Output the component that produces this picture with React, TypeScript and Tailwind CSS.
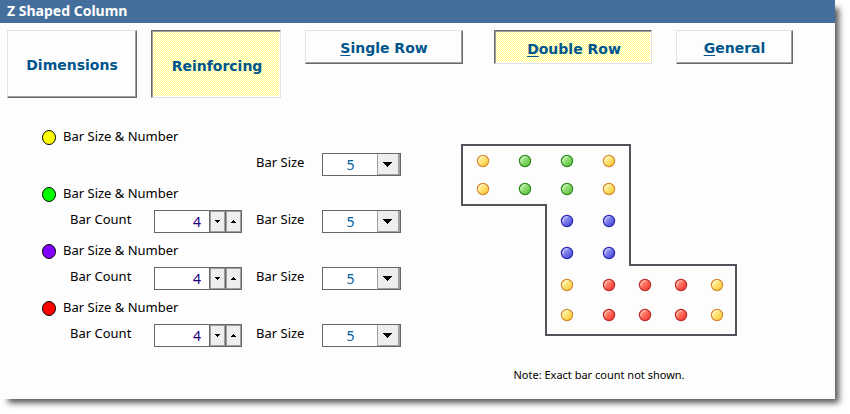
import { useState } from "react"

type Group = {
    id: string
    dot: string
    hasCount: boolean
}

const groups: Group[] = [
    { id: "yellow", dot: "#ffff00", hasCount: false },
    { id: "green", dot: "#00ff00", hasCount: true },
    { id: "purple", dot: "#8000ff", hasCount: true },
    { id: "red", dot: "#ff0000", hasCount: true },
]

// bars drawn inside the section: x, y, colour
const bars: [number, number, string][] = [
    [22, 17, "yellow"], [64, 17, "green"], [106, 17, "green"], [148, 17, "yellow"],
    [22, 45, "yellow"], [64, 45, "green"], [106, 45, "green"], [148, 45, "yellow"],
    [106, 77, "blue"], [148, 77, "blue"],
    [106, 109, "blue"], [148, 109, "blue"],
    [106, 141, "yellow"], [148, 141, "red"], [184, 141, "red"], [220, 141, "red"], [256, 141, "yellow"],
    [106, 171, "yellow"], [148, 171, "red"], [184, 171, "red"], [220, 171, "red"], [256, 171, "yellow"],
]

const barColors: Record<string, { edge: string; light: string; dark: string }> = {
    yellow: { edge: "#d88a30", light: "#fff6a8", dark: "#fbcb3c" },
    green: { edge: "#2f8a1c", light: "#b4f09a", dark: "#62c444" },
    blue: { edge: "#2a2ab8", light: "#a8a8fa", dark: "#4a4ad8" },
    red: { edge: "#c42a2a", light: "#ff9a80", dark: "#f83c34" },
}

function TabButton({ hotkey, label, active, size, onClick }: {
    hotkey?: string
    label: string
    active: boolean
    size: string
    onClick: () => void
}) {
    const look = active
        ? "border-t-[#696969] border-l-[#696969] border-r-[#e3e3e3] border-b-[#e3e3e3] shadow-[inset_1px_1px_#a0a0a0,inset_-1px_-1px_#ffffff] bg-[repeating-conic-gradient(#ffff80_0_25%,#ffffff_0_50%)] bg-[length:2px_2px] bg-[position:1px_0px] pt-[4px] pl-[2px]"
        : "border-t-[#e3e3e3] border-l-[#e3e3e3] border-r-[#696969] border-b-[#696969] shadow-[inset_-1px_-1px_#a0a0a0] bg-[#fdfdfd] pt-[2px]"
    return (
        <button
            type="button"
            aria-pressed={active}
            onClick={onClick}
            className={`shrink-0 border font-['DejaVu_Sans',sans-serif] text-[14px] font-bold text-[#00558c] ${size} ${look}`}
        >
            {hotkey && <span className="underline underline-offset-2">{hotkey}</span>}
            {label}
        </button>
    )
}

function Spinner({ id }: { id: string }) {
    const [count, setCount] = useState(4)
    return (
        <div className="flex h-[23px] w-[88px] border border-[#666666] bg-white">
            <input
                id={id}
                type="text"
                inputMode="numeric"
                value={count}
                onChange={(e) => setCount(Number(e.target.value) || 0)}
                className="min-w-0 flex-1 bg-transparent pr-2 text-right text-[14px] leading-5 text-[#1a007a] outline-none"
            />
            <button
                type="button"
                aria-label="Decrease"
                onClick={() => setCount(Math.max(0, count - 1))}
                className="flex w-4 items-center justify-center border-l border-[#666666] bg-[#eeeeee] shadow-[inset_0_0_0_1px_#a0a0a0]"
            >
                <svg width="5" height="3" viewBox="0 0 5 3" shapeRendering="crispEdges"><path d="M0 0h5v1H4v1H3v1H2V2H1V1H0z" /></svg>
            </button>
            <button
                type="button"
                aria-label="Increase"
                onClick={() => setCount(count + 1)}
                className="flex w-4 items-center justify-center border-l border-[#666666] bg-[#eeeeee] shadow-[inset_0_0_0_1px_#a0a0a0]"
            >
                <svg width="5" height="3" viewBox="0 0 5 3" shapeRendering="crispEdges"><path d="M2 0h1v1h1v1h1v1H0V2h1V1h1z" /></svg>
            </button>
        </div>
    )
}

function SizeSelect({ id }: { id: string }) {
    return (
        <div className="relative h-[23px] w-[79px] border border-[#666666] bg-white">
            <select
                id={id}
                defaultValue="5"
                className="h-full w-full appearance-none bg-transparent pr-[22px] text-center text-[14px] leading-[21px] text-[#0060a0] outline-none"
            >
                {["3", "4", "5", "6", "7", "8", "9", "10", "11"].map((n) => (
                    <option key={n}>{n}</option>
                ))}
            </select>
            <span className="pointer-events-none absolute inset-y-0 right-0 flex w-[23px] items-center justify-center border-l border-[#a0a0a0] bg-[#eeeeee] pr-[3px] shadow-[inset_-2px_-1px_#a0a0a0]">
                <svg width="9" height="5" viewBox="0 0 9 5" shapeRendering="crispEdges"><path d="M0 0h9v1H8v1H7v1H6v1H5v1H4V4H3V3H2V2H1V1H0z" /></svg>
            </span>
        </div>
    )
}

function SectionDrawing() {
    return (
        <svg width="276" height="192" viewBox="0 0 276 192" role="img" aria-label="Z shaped column section">
            <defs>
                {Object.entries(barColors).map(([name, c]) => (
                    <linearGradient key={name} id={`bar-${name}`} x1="0" y1="0" x2="1" y2="1">
                        <stop offset="0.15" stopColor={c.light} />
                        <stop offset="0.85" stopColor={c.dark} />
                    </linearGradient>
                ))}
            </defs>
            <path d="M1 1H169V121H275V191H85V61H1z" fill="none" stroke="#50535a" strokeWidth="2" />
            {bars.map(([x, y, color]) => (
                <g key={`${x}-${y}`}>
                    <circle cx={x} cy={y} r="5.6" fill={`url(#bar-${color})`} stroke={barColors[color].edge} strokeWidth="1.2" />
                    <path
                        d={`M${x - 4} ${y + 1}A4.2 4.2 0 0 1 ${x + 1} ${y - 4}`}
                        fill="none"
                        stroke="#ffffff"
                        strokeOpacity="0.55"
                    />
                </g>
            ))}
        </svg>
    )
}

export default function App() {
    const [page, setPage] = useState("reinforcing")
    const [rows, setRows] = useState("double")

    return (
        <div className="bg-white pr-[15px] pb-[15px] font-['Noto_Sans',sans-serif] text-[13px] text-black">
            <main className="bg-[#fdfdfd] pb-4 shadow-[6px_6px_6px_-2px_rgba(0,0,0,0.65)]">
                <h1 className="h-[23px] bg-[#446f9c] pl-[7px] text-[14px] leading-[22px] font-bold text-white">
                    Z Shaped Column
                </h1>

                {/* TABS */}
                <nav className="flex items-start gap-6 px-[7px] pt-[7px]">
                    <div className="flex gap-[14px]">
                        <TabButton label="Dimensions" size="w-[130px] h-[68px]" active={page === "dimensions"} onClick={() => setPage("dimensions")} />
                        <TabButton label="Reinforcing" size="w-[130px] h-[68px]" active={page === "reinforcing"} onClick={() => setPage("reinforcing")} />
                    </div>
                    <div className="flex gap-[31px]">
                        <TabButton hotkey="S" label="ingle Row" size="w-[158px] h-[34px]" active={rows === "single"} onClick={() => setRows("single")} />
                        <TabButton hotkey="D" label="ouble Row" size="w-[158px] h-[34px]" active={rows === "double"} onClick={() => setRows("double")} />
                    </div>
                    <TabButton hotkey="G" label="eneral" size="w-[117px] h-[34px]" active={rows === "general"} onClick={() => setRows("general")} />
                </nav>

                <div className="flex items-start gap-[60px] pt-[31px] pl-[42px]">
                    {/* BAR GROUPS */}
                    <div className="flex shrink-0 flex-col gap-[10px]">
                        {groups.map((g) => (
                            <section key={g.id}>
                                <h2 className="flex h-4 items-center gap-[7px] leading-[14px]">
                                    <svg width="14" height="15" viewBox="0 0 14 15">
                                        <ellipse cx="7" cy="7.5" rx="6.5" ry="7" fill={g.dot} stroke="#000000" />
                                    </svg>
                                    <span className="pb-[2px]">Bar Size &amp; Number</span>
                                </h2>
                                <div className="mt-2 grid grid-cols-[84px_102px_66px_79px] pl-7 leading-[18px]">
                                    {g.hasCount && (
                                        <>
                                            <label htmlFor={`${g.id}-count`}>Bar Count</label>
                                            <Spinner id={`${g.id}-count`} />
                                        </>
                                    )}
                                    <label htmlFor={`${g.id}-size`} className="col-start-3">Bar Size</label>
                                    <SizeSelect id={`${g.id}-size`} />
                                </div>
                            </section>
                        ))}
                    </div>

                    {/* SECTION */}
                    <div className="flex flex-col items-center gap-[31px] pt-[15px]">
                        <SectionDrawing />
                        <p className="text-[11px] leading-4">Note: Exact bar count not shown.</p>
                    </div>
                </div>
            </main>
        </div>
    )
}
